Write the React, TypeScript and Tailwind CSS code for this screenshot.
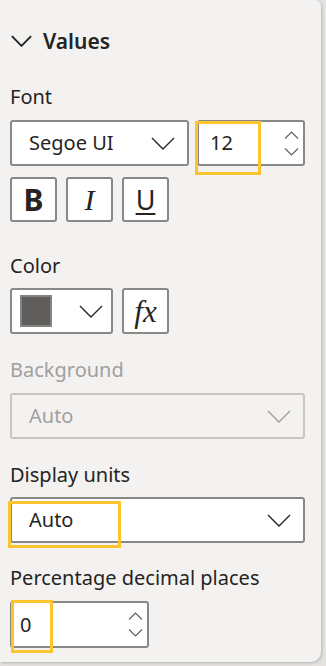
import React from 'react';

const font = { fontFamily: '"Segoe UI", "Noto Sans", "Open Sans", sans-serif' };

function Chevron({ className = '', w = 24, h = 13, sw = 1.4 }: { className?: string; w?: number; h?: number; sw?: number }) {
  return (
    <svg width={w} height={h} viewBox="0 0 24 13" className={className} fill="none">
      <polyline points="1,1 12,12 23,1" stroke="currentColor" strokeWidth={sw} />
    </svg>
  );
}

function Arrows() {
  return (
    <div className="flex flex-col items-center gap-[9px] text-[#605e5c]">
      <svg width="15" height="8" viewBox="0 0 15 8" fill="none">
        <polyline points="1,7.5 7.5,1 14,7.5" stroke="currentColor" strokeWidth="1.1" />
      </svg>
      <svg width="15" height="8" viewBox="0 0 15 8" fill="none">
        <polyline points="1,0.5 7.5,7 14,0.5" stroke="currentColor" strokeWidth="1.1" />
      </svg>
    </div>
  );
}

function Highlight({ className }: { className: string }) {
  return <div className={`absolute border-[3px] border-[#fcc42f] pointer-events-none ${className}`} />;
}

export default function App() {
  return (
    <div className="w-[326px] h-[666px] bg-[#e4e3e2]" style={font}>
      <div className="w-[321px] h-[662px] bg-[#f3f2f1] rounded-br-[10px] rounded-tr-[6px] shadow-[1px_1px_3px_rgba(0,0,0,0.2)] pl-[10px] pr-[16px] text-[#252423]">
        <div className="pt-[26px] h-[56px] flex items-center gap-[11px]">
          <Chevron w={21} h={12} sw={2.2} className="ml-[1px] text-[#252423]" />
          <span className="text-[21px] font-semibold leading-[30px] h-[30px]">Values</span>
        </div>

        <div className="mt-[28px] text-[20px] leading-[26px]">Font</div>
        <div className="mt-[10px] flex">
          <div className="w-[179px] h-[46px] bg-white border-2 border-[#8a8886] rounded-[3px] flex items-center justify-between pl-[17px] pr-[12px]">
            <span className="text-[20px]">Segoe UI</span>
            <Chevron />
          </div>
          <div className="relative ml-[8px] w-[108px] h-[46px] bg-white border-2 border-[#8a8886] rounded-[3px] flex items-center justify-between pl-[11px] pr-[4px]">
            <span className="text-[20px]">12</span>
            <Arrows />
            <Highlight className="-left-[4px] -top-[1px] w-[66px] h-[54px]" />
          </div>
        </div>
        <div className="mt-[11px] flex gap-[9px]">
          <div className="w-[47px] h-[45px] bg-white border-2 border-[#8a8886] rounded-[3px] flex items-center justify-center">
            <span className="text-[30px] font-bold leading-none">B</span>
          </div>
          <div className="w-[47px] h-[45px] bg-white border-2 border-[#8a8886] rounded-[3px] flex items-center justify-center">
            <span className="text-[30px] italic leading-none" style={{ fontFamily: '"Liberation Serif", serif' }}>I</span>
          </div>
          <div className="w-[47px] h-[45px] bg-white border-2 border-[#8a8886] rounded-[3px] flex items-center justify-center">
            <span className="text-[27px] leading-none underline underline-offset-[3px] decoration-2">U</span>
          </div>
        </div>

        <div className="mt-[31px] text-[20px] leading-[26px]">Color</div>
        <div className="mt-[9px] flex gap-[9px]">
          <div className="w-[103px] h-[46px] bg-white border-2 border-[#8a8886] rounded-[3px] flex items-center justify-between pl-[8px] pr-[8px]">
            <div className="w-[32px] h-[32px] bg-[#605e5c] border-2 border-[#858380]" />
            <Chevron />
          </div>
          <div className="w-[47px] h-[46px] bg-white border-2 border-[#8a8886] rounded-[3px] flex items-center justify-center">
            <span className="text-[31px] italic leading-none" style={{ fontFamily: '"Liberation Serif", serif' }}>fx</span>
          </div>
        </div>

        <div className="mt-[23px] text-[20px] leading-[26px] text-[#a19f9d]">Background</div>
        <div className="mt-[10px] h-[46px] bg-[#f3f2f1] border-2 border-[#c8c6c4] rounded-[3px] flex items-center justify-between pl-[17px] pr-[12px] text-[#a19f9d]">
          <span className="text-[20px]">Auto</span>
          <Chevron />
        </div>

        <div className="mt-[23px] text-[20px] leading-[26px]">Display units</div>
        <div className="relative mt-[9px] h-[46px] bg-white border-2 border-[#8a8886] rounded-[3px] flex items-center justify-between pl-[17px] pr-[12px]">
          <span className="text-[20px]">Auto</span>
          <Chevron />
          <Highlight className="-left-[4px] top-[2px] w-[113px] h-[47px]" />
        </div>

        <div className="mt-[22px] text-[20px] leading-[26px]">Percentage decimal places</div>
        <div className="relative mt-[10px] w-[139px] h-[47px] bg-white border-2 border-[#8a8886] rounded-[3px] flex items-center justify-between pl-[8px] pr-[4px]">
          <span className="text-[20px]">0</span>
          <Arrows />
          <Highlight className="-left-[1px] -top-[3px] w-[42px] h-[53px]" />
        </div>
      </div>
    </div>
  );
}
